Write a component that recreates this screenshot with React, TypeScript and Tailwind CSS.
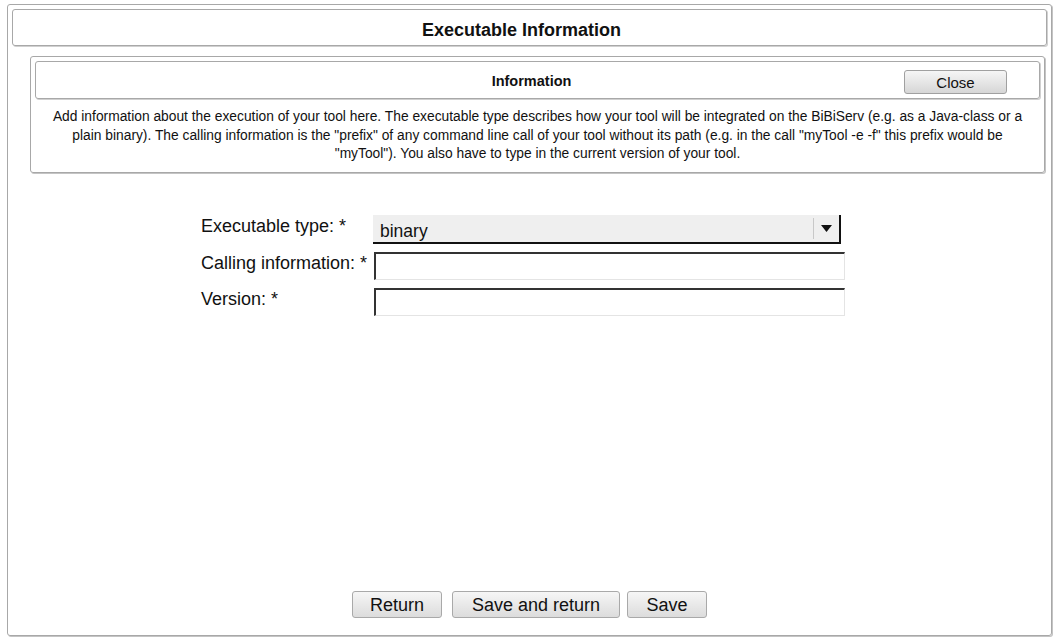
import React, { useState } from 'react';

const font = { fontFamily: '"Liberation Sans", Arial, sans-serif' };

const GrayButton: React.FC<{ label: string; className?: string }> = ({ label, className }) => (
  <button
    className={`h-[27px] rounded-[3px] border border-[#a9a9a9] bg-gradient-to-b from-[#f6f6f6] to-[#dcdcdc] text-[18px] text-[#111] leading-none ${className ?? ''}`}
  >
    {label}
  </button>
);

const App: React.FC = () => {
  const [type, setType] = useState('binary');

  return (
    <div className="w-[1058px] h-[642px] bg-white pt-[4px] pl-[7px]" style={font}>
      <div className="w-[1045px] h-[632px] flex flex-col rounded-[3px] border border-[#a8a8a8] shadow-[1px_1px_0_#c4c4c4] p-[4px]">
        {/* title bar */}
        <div className="h-[37px] shrink-0 flex items-center justify-center pt-[6px] pr-[16px] rounded-[3px] border border-[#a8a8a8] shadow-[1px_1px_0_#d0d0d0]">
          <span className="text-[18px] font-bold text-[#111]">Executable Information</span>
        </div>

        {/* info box */}
        <div className="ml-[18px] mr-[2px] mt-[10px] h-[117px] shrink-0 rounded-[3px] border border-[#a8a8a8] shadow-[1px_1px_0_#c4c4c4] p-[4px] flex flex-col">
          <div className="relative h-[38px] shrink-0 flex items-center justify-center pt-[3px] pr-[12px] rounded-[3px] border border-[#a8a8a8] shadow-[1px_1px_0_#d0d0d0]">
            <span className="text-[14.5px] font-bold text-[#111]">Information</span>
            <button className="absolute right-[32px] top-[8px] w-[103px] h-[24px] rounded-[3px] border border-[#a0a0a0] bg-gradient-to-b from-[#f6f6f6] to-[#d6d6d6] text-[15px] text-[#111] leading-none">
              Close
            </button>
          </div>
          <p className="px-[14px] pt-[9px] text-[13.8px] leading-[18.5px] text-center text-[#111]">
            Add information about the execution of your tool here. The executable type describes how your tool will be
            integrated on the BiBiServ (e.g. as a Java-class or a plain binary). The calling information is the "prefix"
            of any command line call of your tool without its path (e.g. in the call "myTool -e -f" this prefix would be
            "myTool"). You also have to type in the current version of your tool.
          </p>
        </div>

        {/* form */}
        <div className="ml-[189px] mt-[42px] grid grid-cols-[172px_472px] gap-y-[8px] text-[18px] text-[#111]">
          <div className="h-[29px] -mt-[2px] whitespace-nowrap">Executable type: *</div>
          <div className="relative h-[29px] w-[468px] bg-[#efefef] border-r-2 border-b-2 border-[#111] flex items-center">
            <select
              value={type}
              onChange={(e) => setType(e.target.value)}
              className="appearance-none bg-transparent outline-none w-full h-full pl-[7px] pt-[3px] text-[17.5px]"
            >
              <option value="binary">binary</option>
              <option value="java">java</option>
            </select>
            <div className="pointer-events-none absolute right-0 top-[3px] bottom-[3px] w-[26px] border-l border-[#c8c8c8] flex items-center justify-center">
              <svg width="11" height="7" viewBox="0 0 11 7">
                <path d="M0 0 L11 0 L5.5 7 Z" fill="#111" />
              </svg>
            </div>
          </div>

          <div className="h-[29px] -mt-[2px] whitespace-nowrap">Calling information: *</div>
          <input className="h-[28px] w-[471px] ml-[1px] border-t-2 border-l-2 border-[#333] border-r border-b border-r-[#e4e4e4] border-b-[#e4e4e4] outline-none" />

          <div className="h-[29px] -mt-[2px] whitespace-nowrap">Version: *</div>
          <input className="h-[28px] w-[471px] ml-[1px] border-t-2 border-l-2 border-[#333] border-r border-b border-r-[#e4e4e4] border-b-[#e4e4e4] outline-none" />
        </div>

        {/* buttons */}
        <div className="mt-auto mb-[13px] flex justify-center gap-[10px]">
          <GrayButton label="Return" className="w-[90px]" />
          <GrayButton label="Save and return" className="w-[168px]" />
          <GrayButton label="Save" className="w-[80px] -ml-[3px]" />
        </div>
      </div>
    </div>
  );
};

export default App;
